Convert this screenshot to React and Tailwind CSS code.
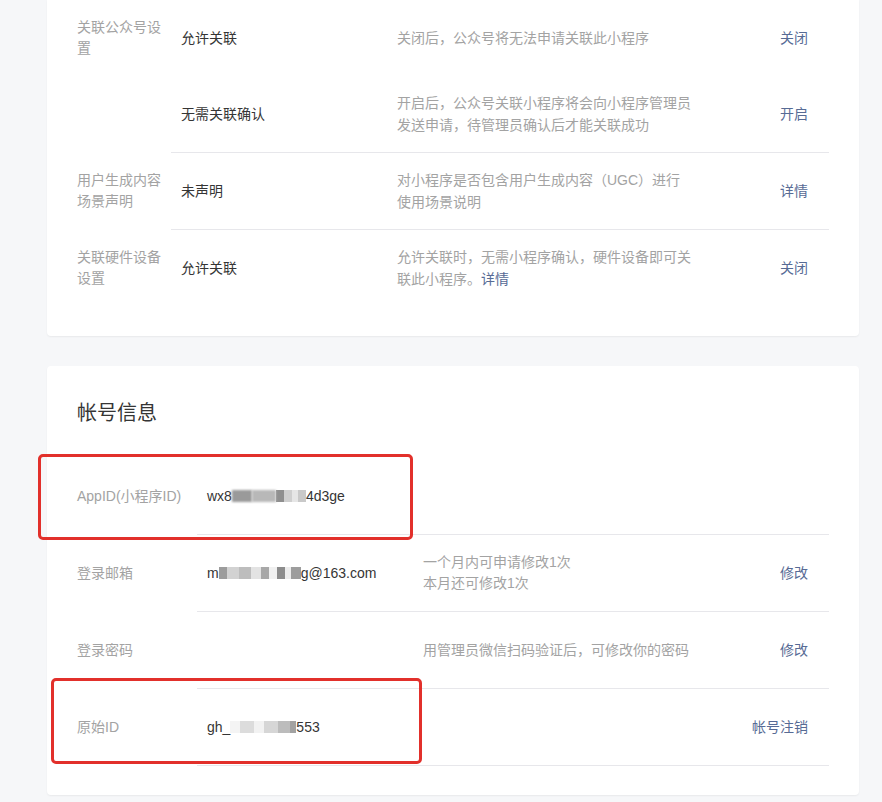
const font = { fontFamily: '"Liberation Sans", "Noto Sans CJK SC", sans-serif' };

const settings = [
  { label: '关联公众号设置', value: '允许关联', desc: ['关闭后，公众号将无法申请关联此小程序'], action: '关闭', border: false },
  { label: '', value: '无需关联确认', desc: ['开启后，公众号关联小程序将会向小程序管理员发送申请，待管理员确认后才能关联成功'], action: '开启', border: false },
  { label: '用户生成内容场景声明', value: '未声明', desc: ['对小程序是否包含用户生成内容（UGC）进行使用场景说明'], action: '详情', border: true },
  { label: '关联硬件设备设置', value: '允许关联', desc: ['允许关联时，无需小程序确认，硬件设备即可关联此小程序。'], link: '详情', action: '关闭', border: true },
];

function Mosaic({ blocks }) {
  return (
    <span className="inline-flex items-center h-[14px] align-middle">
      {blocks.map((c, i) => (
        <span key={i} className={`inline-block h-[12px] ${c}`} />
      ))}
    </span>
  );
}

function SettingRow({ row }) {
  return (
    <div className="flex">
      <div className="w-[94px] shrink-0 flex items-center pr-[4px] text-[14px] leading-[21px] text-[#a3a3a3]">
        {row.label}
      </div>
      <div className={`flex flex-1 items-center ${row.border ? 'h-[77px] border-t border-[#e7e7eb]' : 'h-[76px]'}`}>
        <div className="w-[226px] shrink-0 pl-[10px] text-[14px] text-[#353535]">{row.value}</div>
        <div className="w-[296px] shrink-0 text-[14px] leading-[22px] text-[#a3a3a3]">
          {row.desc}
          {row.link && <span className="text-[#576b95]">{row.link}</span>}
        </div>
        <div className="flex-1 text-right pr-[21px] text-[14px] text-[#576b95]">{row.action}</div>
      </div>
    </div>
  );
}

function AccountRow({ label, value, desc, action }) {
  return (
    <div className="flex">
      <div className="w-[120px] shrink-0 flex items-center text-[14px] text-[#a3a3a3]">{label}</div>
      <div className="flex flex-1 items-center h-[77px] border-b border-[#e7e7eb]">
        <div className="w-[226px] shrink-0 pl-[10px] text-[14px] text-[#353535] whitespace-nowrap">{value}</div>
        <div className="w-[296px] shrink-0 text-[14px] leading-[21px] text-[#a3a3a3]">{desc}</div>
        <div className="flex-1 text-right pr-[21px] text-[14px] text-[#576b95]">{action}</div>
      </div>
    </div>
  );
}

export default function App() {
  return (
    <div className="min-h-screen bg-[#f6f7f9] px-[47px] pb-[10px] overflow-hidden" style={font}>
      <div className="w-[812px] bg-white rounded-b-[4px] shadow-[0_1px_2px_rgba(0,0,0,0.06)] pl-[30px] pr-[30px] pb-[30px] pt-0">
        {settings.map((row, i) => (
          <SettingRow key={i} row={row} />
        ))}
      </div>

      <div className="relative w-[812px] mt-[30px] bg-white rounded-[4px] shadow-[0_1px_2px_rgba(0,0,0,0.06)] pl-[30px] pr-[30px] pt-[33px] pb-[29px]">
        <h2 className="text-[20px] leading-[28px] font-normal text-[#353535] mb-[31px]">帐号信息</h2>

        <AccountRow
          label="AppID(小程序ID)"
          value={
            <span className="inline-flex items-center">
              wx8
              <Mosaic blocks={['w-[20px] bg-[#9a9a9a] blur-[1px]', 'w-[24px] bg-[#b8b8b8] blur-[1px]', 'w-[8px] bg-[#8f8f8f]', 'w-[8px] bg-[#cfcfcf]', 'w-[6px] bg-[#e6e6e6]', 'w-[8px] bg-[#c9c9c9]']} />
              4d3ge
            </span>
          }
        />
        <AccountRow
          label="登录邮箱"
          value={
            <span className="inline-flex items-center">
              m
              <Mosaic blocks={['w-[8px] bg-[#9c9c9c]', 'w-[12px] bg-[#d2d2d2]', 'w-[12px] bg-[#bdbdbd]', 'w-[10px] bg-[#e3e3e3]', 'w-[8px] bg-[#a8a8a8]', 'w-[8px] bg-[#f0f0f0]', 'w-[8px] bg-[#8c8c8c]', 'w-[6px] bg-[#ececec]', 'w-[10px] bg-[#9d9d9d]']} />
              g@163.com
            </span>
          }
          desc={<>一个月内可申请修改1次<br />本月还可修改1次</>}
          action="修改"
        />
        <AccountRow label="登录密码" value="" desc="用管理员微信扫码验证后，可修改你的密码" action="修改" />
        <AccountRow
          label="原始ID"
          value={
            <span className="inline-flex items-center">
              gh_
              <Mosaic blocks={['w-[10px] bg-[#f4f4f4]', 'w-[14px] bg-[#dcdcdc]', 'w-[10px] bg-[#f2f2f2]', 'w-[14px] bg-[#d6d6d6]', 'w-[12px] bg-[#bcbcbc]', 'w-[6px] bg-[#a2a2a2]']} />
              553
            </span>
          }
          action="帐号注销"
        />

        {/* red annotation boxes */}
        <div className="absolute left-[-9px] top-[88px] w-[375px] h-[86px] border-[3px] border-[#e2302b] rounded-[5px] pointer-events-none" />
        <div className="absolute left-[4px] top-[312px] w-[371px] h-[86px] border-[3px] border-[#e2302b] rounded-[5px] pointer-events-none" />
      </div>
    </div>
  );
}
